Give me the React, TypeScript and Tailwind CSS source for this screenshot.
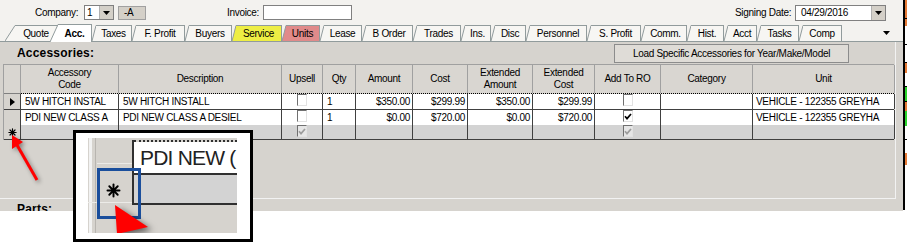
import React from 'react';

type Tab = { label: string; w: string; slant: number; body: string; fill: string; active?: boolean };

const tabs: Tab[] = [
  { label: 'Quote', w: 'w-[53px]', slant: 10, body: 'bg-[#f7f6f3]', fill: '#f7f6f3' },
  { label: 'Acc.', w: 'w-[42px]', slant: 8, body: 'bg-white font-bold', fill: '#ffffff', active: true },
  { label: 'Taxes', w: 'w-[40px]', slant: 4, body: 'bg-[#f7f6f3]', fill: '#f7f6f3' },
  { label: 'F. Profit', w: 'w-[53px]', slant: 4, body: 'bg-[#f7f6f3]', fill: '#f7f6f3' },
  { label: 'Buyers', w: 'w-[47px]', slant: 4, body: 'bg-[#f7f6f3]', fill: '#f7f6f3' },
  { label: 'Service', w: 'w-[50px]', slant: 4, body: 'bg-[#eeee44]', fill: '#eeee44' },
  { label: 'Units', w: 'w-[38px]', slant: 4, body: 'bg-[#e08a8a]', fill: '#e08a8a' },
  { label: 'Lease', w: 'w-[42px]', slant: 4, body: 'bg-[#f7f6f3]', fill: '#f7f6f3' },
  { label: 'B Order', w: 'w-[51px]', slant: 4, body: 'bg-[#f7f6f3]', fill: '#f7f6f3' },
  { label: 'Trades', w: 'w-[48px]', slant: 4, body: 'bg-[#f7f6f3]', fill: '#f7f6f3' },
  { label: 'Ins.', w: 'w-[30px]', slant: 4, body: 'bg-[#f7f6f3]', fill: '#f7f6f3' },
  { label: 'Disc', w: 'w-[35px]', slant: 4, body: 'bg-[#f7f6f3]', fill: '#f7f6f3' },
  { label: 'Personnel', w: 'w-[61px]', slant: 4, body: 'bg-[#f7f6f3]', fill: '#f7f6f3' },
  { label: 'S. Profit', w: 'w-[54px]', slant: 4, body: 'bg-[#f7f6f3]', fill: '#f7f6f3' },
  { label: 'Comm.', w: 'w-[46px]', slant: 4, body: 'bg-[#f7f6f3]', fill: '#f7f6f3' },
  { label: 'Hist.', w: 'w-[37px]', slant: 4, body: 'bg-[#f7f6f3]', fill: '#f7f6f3' },
  { label: 'Acct', w: 'w-[33px]', slant: 4, body: 'bg-[#f7f6f3]', fill: '#f7f6f3' },
  { label: 'Tasks', w: 'w-[42px]', slant: 4, body: 'bg-[#f7f6f3]', fill: '#f7f6f3' },
  { label: 'Comp', w: 'w-[43px]', slant: 4, body: 'bg-[#f7f6f3]', fill: '#f7f6f3' },
];

const cols = 'grid grid-cols-[17px_98px_163px_41px_33px_57px_55px_65px_62px_66px_92px_142px]';

const heads = [
  [''],
  ['Accessory', 'Code'],
  ['Description'],
  ['Upsell'],
  ['Qty'],
  ['Amount'],
  ['Cost'],
  ['Extended', 'Amount'],
  ['Extended', 'Cost'],
  ['Add To RO'],
  ['Category'],
  ['Unit'],
];

type Row = {
  code: string;
  desc: string;
  upsell: boolean;
  qty: string;
  amount: string;
  cost: string;
  extAmt: string;
  extCost: string;
  ro: boolean;
  unit: string;
};

const rows: Row[] = [
  {
    code: '5W HITCH INSTAL',
    desc: '5W HITCH INSTALL',
    upsell: false,
    qty: '1',
    amount: '$350.00',
    cost: '$299.99',
    extAmt: '$350.00',
    extCost: '$299.99',
    ro: false,
    unit: 'VEHICLE - 122355 GREYHA',
  },
  {
    code: 'PDI NEW CLASS A',
    desc: 'PDI NEW CLASS A DESIEL',
    upsell: false,
    qty: '1',
    amount: '$0.00',
    cost: '$720.00',
    extAmt: '$0.00',
    extCost: '$720.00',
    ro: true,
    unit: 'VEHICLE - 122355 GREYHA',
  },
];

const strip = [
  'h-[18px] bg-[#e57a35]',
  'h-[1px] bg-black',
  'h-[7px] bg-[#e57a35]',
  'h-[18px] bg-white',
  'h-[1px] bg-black',
  'h-[17px] bg-white',
  'h-[1px] bg-black',
  'h-[10px] bg-[#e57a35]',
  'h-[13px] bg-white',
  'h-[1px] bg-black',
  'h-[14px] bg-[#2bd42b]',
  'h-[1px] bg-black',
  'h-[9px] bg-[#e57a35]',
  'h-[15px] bg-[#2bd42b]',
  'h-[13px] bg-white',
  'h-[1px] bg-black',
  'h-[13px] bg-white',
  'h-[12px] bg-[#e57a35]',
];

const DownArrow = () => (
  <svg width="7" height="4" viewBox="0 0 7 4">
    <polygon points="0,0 7,0 3.5,4" fill="#000" />
  </svg>
);

const DropBtn = () => (
  <div className="flex w-[14px] shrink-0 items-center justify-center border-l border-[#b0b0b0] bg-[#d4d0c8]">
    <DownArrow />
  </div>
);

const Star = ({ size }: { size: number }) => (
  <svg width={size} height={size} viewBox="0 0 10 10">
    <g stroke="#000" strokeWidth="1.3" strokeLinecap="round">
      <line x1="5" y1="1" x2="5" y2="9" />
      <line x1="1" y1="5" x2="9" y2="5" />
      <line x1="2.2" y1="2.2" x2="7.8" y2="7.8" />
      <line x1="7.8" y1="2.2" x2="2.2" y2="7.8" />
    </g>
    <circle cx="5" cy="5" r="1.6" fill="#000" />
  </svg>
);

const Check = ({ on, disabled }: { on: boolean; disabled?: boolean }) => (
  <div
    className={`flex h-[12px] w-[10px] items-center justify-center border border-[#707070] border-r-[#e2e2e2] border-b-[#e2e2e2] ${
      disabled ? 'bg-[#e6e6e6]' : 'bg-white'
    }`}
  >
    {on && (
      <svg width="8" height="7" viewBox="0 0 8 7">
        <path d="M1 3.3 L3 5.6 L7 1" fill="none" stroke={disabled ? '#9c9c9c' : '#000'} strokeWidth="1.7" />
      </svg>
    )}
  </div>
);

function TabItem({ t }: { t: Tab }) {
  const h = t.active ? 18 : 16;
  return (
    <div className={`flex shrink-0 ${t.w} ${t.active ? 'relative z-10 -mb-px -ml-[8px] h-[18px]' : 'h-[16px]'}`}>
      <svg width={t.slant} height={h} className="shrink-0">
        <polygon points={`0,${h} ${t.slant},0.5 ${t.slant},${h}`} fill={t.fill} />
        <line x1="0" y1={h} x2={t.slant} y2="0.5" stroke="#919b9c" />
      </svg>
      <div className={`flex flex-1 items-center justify-center border-t border-r border-[#919b9c] ${t.body}`}>
        {t.label}
      </div>
    </div>
  );
}

function Grid() {
  return (
    <div className="ml-[3px] w-[891px] border-t border-l border-[#a0a0a0]">
      <div className={`${cols} h-[28px] bg-[#d9d6d1]`}>
        {heads.map((h, i) => (
          <div key={i} className="flex flex-col items-center justify-center border-r border-[#a0a0a0] leading-[12px]">
            {h.map((l) => (
              <span key={l}>{l}</span>
            ))}
          </div>
        ))}
      </div>
      <div className="flex h-px">
        <div className="w-[17px] bg-[#808080]" />
        <div className="flex-1 border-t border-dotted border-black" />
      </div>
      {rows.map((r, i) => (
        <div key={r.code} className={`${cols} ${i === 0 ? 'h-[16px]' : 'h-[15px]'} border-b border-[#404040]`}>
          <div className="flex items-center justify-center border-r border-[#404040] bg-[#d6d3ce]">
            {i === 0 && (
              <svg width="5" height="8" viewBox="0 0 5 8">
                <polygon points="0,0 5,4 0,8" fill="#000" />
              </svg>
            )}
          </div>
          <div className="flex items-center border-r border-[#404040] bg-white pl-[4px]">{r.code}</div>
          <div className="flex items-center border-r border-[#404040] bg-white pl-[4px]">{r.desc}</div>
          <div className="flex justify-center border-r border-[#404040] bg-white">
            <Check on={r.upsell} />
          </div>
          <div className="flex items-center border-r border-[#404040] bg-white pl-[4px]">{r.qty}</div>
          <div className="flex items-center justify-end border-r border-[#404040] bg-white pr-[2px]">{r.amount}</div>
          <div className="flex items-center justify-end border-r border-[#404040] bg-white pr-[2px]">{r.cost}</div>
          <div className="flex items-center justify-end border-r border-[#404040] bg-white pr-[2px]">{r.extAmt}</div>
          <div className="flex items-center justify-end border-r border-[#404040] bg-white pr-[2px]">{r.extCost}</div>
          <div className="flex justify-center border-r border-[#404040] bg-white">
            <Check on={r.ro} />
          </div>
          <div className="border-r border-[#404040] bg-white" />
          <div className="flex items-center border-r border-[#404040] bg-white pl-[3px]">{r.unit}</div>
        </div>
      ))}
      <div className={`${cols} h-[15px] border-b border-[#404040]`}>
        <div className="flex items-center justify-center border-r border-[#404040] bg-[#d6d3ce]">
          <Star size={9} />
        </div>
        <div className="border-r border-[#404040] bg-[#d3d3d3]" />
        <div className="border-r border-[#404040] bg-[#d3d3d3]" />
        <div className="flex justify-center border-r border-[#404040] bg-[#d3d3d3]">
          <Check on disabled />
        </div>
        <div className="border-r border-[#404040] bg-[#d3d3d3]" />
        <div className="border-r border-[#404040] bg-[#d3d3d3]" />
        <div className="border-r border-[#404040] bg-[#d3d3d3]" />
        <div className="border-r border-[#404040] bg-[#d3d3d3]" />
        <div className="border-r border-[#404040] bg-[#d3d3d3]" />
        <div className="flex justify-center border-r border-[#404040] bg-[#d3d3d3]">
          <Check on disabled />
        </div>
        <div className="border-r border-[#404040] bg-[#d3d3d3]" />
        <div className="border-r border-[#404040] bg-[#d3d3d3]" />
      </div>
    </div>
  );
}

function Inset() {
  return (
    <div className="absolute left-[73px] top-[130px] h-[112px] w-[180px] border-[3px] border-black bg-white">
      <div className="relative ml-[12px] mt-[5px] h-[95px] w-[149px] overflow-hidden bg-[#d6d3ce]">
        <div className="absolute left-[1px] top-0 h-full w-[3px] bg-[#f2f2f2]" />
        <div className="absolute left-[7px] top-0 h-full w-px bg-[#b8b5b0]" />
        <div className="absolute left-[9px] top-[25px] h-px w-[35px] bg-[#ecebe8]" />
        <div className="absolute left-0 top-[64px] h-px w-full bg-[#ecebe8]" />
        <div className="absolute left-[44px] right-0 top-[2px] flex h-[65px] flex-col border-l-2 border-[#303030]">
          <div className="h-0 border-t-2 border-dotted border-[#303030]" />
          <div className="flex h-[33px] items-center overflow-hidden border-b-2 border-[#303030] bg-white pl-[6px] text-[21px] tracking-[-0.8px] text-[#222]">
            <span className="whitespace-nowrap">PDI NEW (</span>
          </div>
          <div className="flex-1 border-b-2 border-[#303030] bg-[#d3d3d3]" />
        </div>
        <div className="absolute left-[18px] top-[45px]">
          <Star size={15} />
        </div>
        <div className="absolute left-[9px] top-[30px] h-[51px] w-[44px] border-[3px] border-[#1a4e9c]" />
        <svg className="absolute left-0 top-0 drop-shadow-[4px_3px_3px_rgba(0,0,0,0.55)]" width="149" height="95">
          <polygon points="27,67 60,89 29,96" fill="#ff0000" />
        </svg>
      </div>
    </div>
  );
}

export default function App() {
  return (
    <div className="relative h-[250px] w-[907px] overflow-hidden bg-white font-['Liberation_Sans',Arial,sans-serif] text-[10px] tracking-[-0.3px] text-black">
      <div className="flex h-[210px]">
        <div className="flex w-[903px] flex-col">
          {/* top fields */}
          <div className="flex h-[25px] shrink-0 items-center bg-[#f3f2ef]">
            <span className="ml-[35px] w-[47px] shrink-0">Company:</span>
            <div className="ml-[2px] flex h-[15px] w-[30px] shrink-0 border border-[#808080] bg-white">
              <span className="flex-1 pl-[2px] leading-[13px]">1</span>
              <DropBtn />
            </div>
            <div className="ml-[4px] flex h-[14px] w-[28px] shrink-0 items-center border border-[#a0a0a0] bg-[#d4d0c8] pl-[5px]">
              -A
            </div>
            <span className="ml-[81px] w-[35px] shrink-0">Invoice:</span>
            <div className="ml-[1px] h-[15px] w-[89px] shrink-0 border border-[#808080] bg-white" />
            <span className="ml-[383px] w-[60px] shrink-0">Signing Date:</span>
            <div className="flex h-[16px] w-[91px] shrink-0 border border-[#808080] bg-white">
              <span className="flex-1 pl-[5px] leading-[14px]">04/29/2016</span>
              <DropBtn />
            </div>
          </div>

          {/* tabs */}
          <div className="flex h-[17px] shrink-0 items-end border-b border-[#919b9c] bg-[#f3f2ef] pl-[5px]">
            {tabs.map((t) => (
              <TabItem key={t.label} t={t} />
            ))}
            <div className="mb-[6px] ml-auto mr-[13px]">
              <DownArrow />
            </div>
          </div>

          {/* panel */}
          <div className="flex flex-1 flex-col bg-[#d6d3ce]">
            <div className="flex h-[157px] w-[896px] shrink-0 flex-col border-r border-b border-[#f2f2f2]">
              <div className="flex h-[22px] shrink-0 items-start">
                <span className="ml-[17px] self-center text-[12px] font-bold tracking-[0.2px]">Accessories:</span>
                <div className="ml-auto mr-[46px] mt-[2px] flex h-[19px] w-[235px] items-center justify-center border border-[#8c8c8c] bg-[#dfdcd7]">
                  Load Specific Accessories for Year/Make/Model
                </div>
              </div>
              <Grid />
            </div>
            <div className="h-[12px] overflow-hidden pl-[17px]">
              <div className="mt-[3px] text-[12px] font-bold leading-[14px] tracking-[0.2px]">Parts:</div>
            </div>
          </div>
        </div>
        <div className="w-[2px] bg-black" />
        <div className="flex w-[2px] flex-col">
          {strip.map((s, i) => (
            <div key={i} className={s} />
          ))}
          <div className="flex-1 bg-white" />
        </div>
      </div>

      <Inset />

      <svg className="absolute left-0 top-[130px] drop-shadow-[2px_2px_2px_rgba(0,0,0,0.4)]" width="45" height="56">
        <line x1="17" y1="15" x2="37" y2="50" stroke="#ff0000" strokeWidth="3" />
        <polygon points="12,5 23,12 12,19" fill="#ff0000" />
      </svg>
    </div>
  );
}
